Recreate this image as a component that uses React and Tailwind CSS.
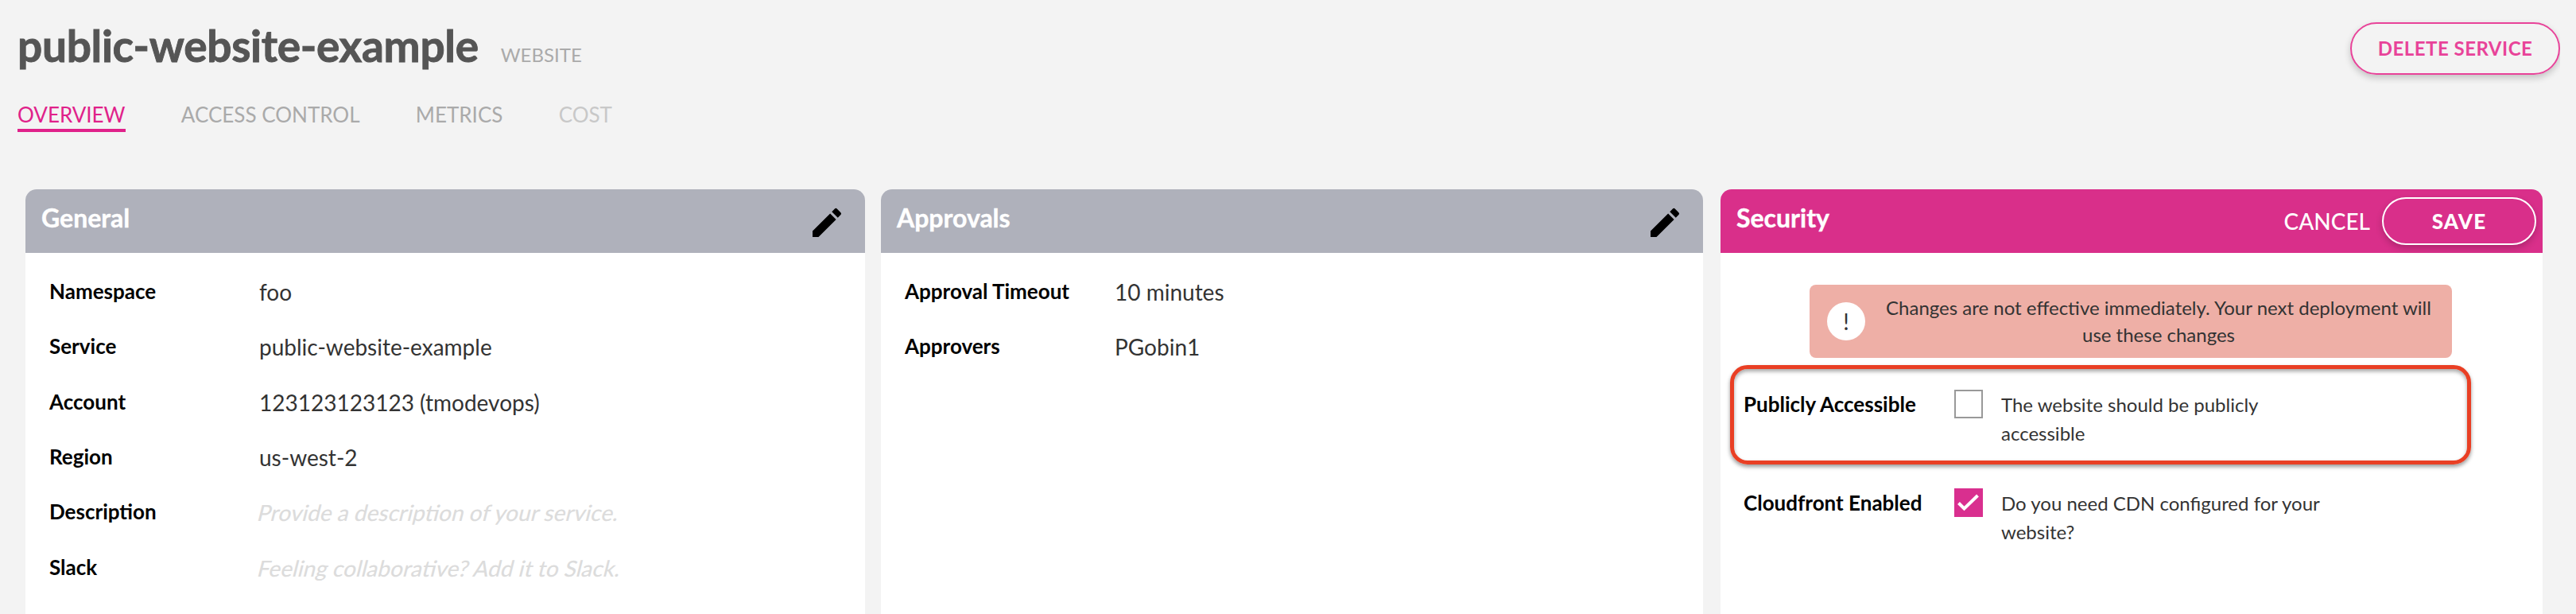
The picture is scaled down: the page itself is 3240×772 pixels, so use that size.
import { clsx } from "clsx";

const TABS = [
  { label: "OVERVIEW", active: true },
  { label: "ACCESS CONTROL" },
  { label: "METRICS" },
  { label: "COST", disabled: true },
];

const GENERAL = [
  { label: "Namespace", value: "foo" },
  { label: "Service", value: "public-website-example" },
  { label: "Account", value: "123123123123 (tmodevops)" },
  { label: "Region", value: "us-west-2" },
  { label: "Description", placeholder: "Provide a description of your service." },
  { label: "Slack", placeholder: "Feeling collaborative? Add it to Slack." },
];

const APPROVALS = [
  { label: "Approval Timeout", value: "10 minutes" },
  { label: "Approvers", value: "PGobin1" },
];

function PencilIcon() {
  return (
    <svg viewBox="0 0 24 24" className="size-12 fill-black">
      <path d="M3 17.25V21h3.75L17.81 9.94l-3.75-3.75L3 17.25zM20.71 7.04a.996.996 0 0 0 0-1.41l-2.34-2.34a.996.996 0 0 0-1.41 0l-1.83 1.83 3.75 3.75 1.83-1.83z" />
    </svg>
  );
}

function Card({ title, active, actions, className, children }) {
  return (
    <section className={clsx("flex flex-col overflow-hidden rounded-t-[14px] bg-white", className)}>
      <div className={clsx("flex h-20 shrink-0 justify-between pl-5", active ? "bg-[#d92f8a]" : "bg-[#afb1bb]")}>
        <h2 className="pt-4 text-[32px] leading-[40px] font-bold text-white [-webkit-text-stroke:0.4px]">{title}</h2>
        {actions}
      </div>
      {children}
    </section>
  );
}

function EditButton() {
  return (
    <button className="mr-6 flex items-center pt-1">
      <PencilIcon />
    </button>
  );
}

function Fields({ rows }) {
  return (
    <dl className="pt-8 pl-[30px]">
      {rows.map((row) => (
        <div key={row.label} className="flex h-[69.33px]">
          <dt className="w-[264px] text-[26px] leading-8 font-bold text-black">{row.label}</dt>
          {row.value ? (
            <dd className="text-[28px] leading-[34px] text-[#333]">{row.value}</dd>
          ) : (
            <dd className="-ml-px h-[34px] -skew-x-14 text-[28px] leading-[34px] font-medium text-[#dcdcdc]">
              {row.placeholder}
            </dd>
          )}
        </div>
      ))}
    </dl>
  );
}

function Checkbox({ checked }) {
  if (!checked) return <span className="size-9 shrink-0 border-2 border-[#999] bg-white" />;
  return (
    <span className="size-9 shrink-0 bg-[#d92f8f]">
      <svg viewBox="0 0 36 36" className="size-9 fill-none stroke-white stroke-4">
        <path d="M5.5 18.5l7 7L29.5 9" />
      </svg>
    </span>
  );
}

function Option({ label, checked, children, highlighted }) {
  return (
    <div className="relative flex h-[72px] pl-[29px]">
      {highlighted && (
        <div className="absolute -top-[31px] left-3 h-[125px] w-[932px] rounded-[22px] border-5 border-[#e93f24] shadow-[0_3px_5px_rgba(0,0,0,0.4),inset_0_3px_5px_rgba(0,0,0,0.35)]" />
      )}
      <span className="mt-[2px] w-[265px] text-[26px] leading-8 font-bold text-black">{label}</span>
      <Checkbox checked={checked} />
      <p className="mt-px ml-[23px] w-[430px] text-2xl leading-9 text-[#333]">{children}</p>
    </div>
  );
}

export default function App() {
  return (
    <div className="flex h-[772px] w-[3240px] flex-col overflow-hidden bg-[#f3f3f3] font-['Lato',sans-serif]">
      <header className="flex h-[238px] shrink-0 justify-between pr-5 pl-[22px]">
        <div>
          <div className="flex items-baseline gap-[28px] pt-[25px]">
            <h1 className="text-[55px] leading-[64px] font-bold tracking-[-0.3px] text-[#555] [-webkit-text-stroke:0.9px]">
              public-website-example
            </h1>
            <span className="text-2xl text-[#aaa]">WEBSITE</span>
          </div>
          <nav className="mt-[39px] flex gap-[70.3px]">
            {TABS.map((tab) => (
              <a
                key={tab.label}
                className={clsx(
                  "border-b-4 pb-[2px] text-[26px] leading-8",
                  tab.active && "border-[#e0218a] text-[#e0218a]",
                  !tab.active && "border-transparent",
                  tab.disabled && "text-[#c8c8c8]",
                  !tab.active && !tab.disabled && "text-[#aaa]"
                )}
              >
                {tab.label}
              </a>
            ))}
          </nav>
        </div>
        <button className="mt-7 flex h-[66px] w-[264px] items-center justify-center rounded-full border-2 border-[#e84399] text-2xl font-bold tracking-[0.5px] text-[#e84399] shadow-[0_4px_8px_rgba(0,0,0,0.2)] [clip-path:inset(-4px_0_-20px_-20px)]">
          DELETE SERVICE
        </button>
      </header>

      <main className="flex flex-1 pl-8">
        <Card title="General" className="w-[1056px]" actions={<EditButton />}>
          <Fields rows={GENERAL} />
        </Card>
        <Card title="Approvals" className="ml-5 w-[1034px]" actions={<EditButton />}>
          <Fields rows={APPROVALS} />
        </Card>
        <Card
          title="Security"
          active
          className="ml-[22px] w-[1034px]"
          actions={
            <div className="flex gap-[15px] pt-[10px] pr-2">
              <button className="h-[60px] text-[28px] leading-[60px] font-medium text-white">CANCEL</button>
              <button className="flex h-[60px] w-[194px] items-center justify-center rounded-full border-2 border-white text-[26px] font-black tracking-[1.2px] text-white shadow-[0_4px_8px_rgba(0,0,0,0.2)]">
                SAVE
              </button>
            </div>
          }
        >
          <div className="mt-10 ml-28 flex h-[92px] w-[808px] shrink-0 items-center rounded-lg bg-[#eeafa6] pl-[22px]">
            <span className="flex size-12 shrink-0 items-center justify-center rounded-full bg-white text-[28px] text-[#333]">
              !
            </span>
            <p className="flex-1 px-5 text-center text-2xl leading-[34px] text-[#333]">
              Changes are not effective immediately. Your next deployment will use these changes
            </p>
          </div>
          <div className="flex flex-col gap-[52px] pt-10">
            <Option label="Publicly Accessible" highlighted>
              The website should be publicly accessible
            </Option>
            <Option label="Cloudfront Enabled" checked>
              Do you need CDN configured for your website?
            </Option>
          </div>
        </Card>
      </main>
    </div>
  );
}
